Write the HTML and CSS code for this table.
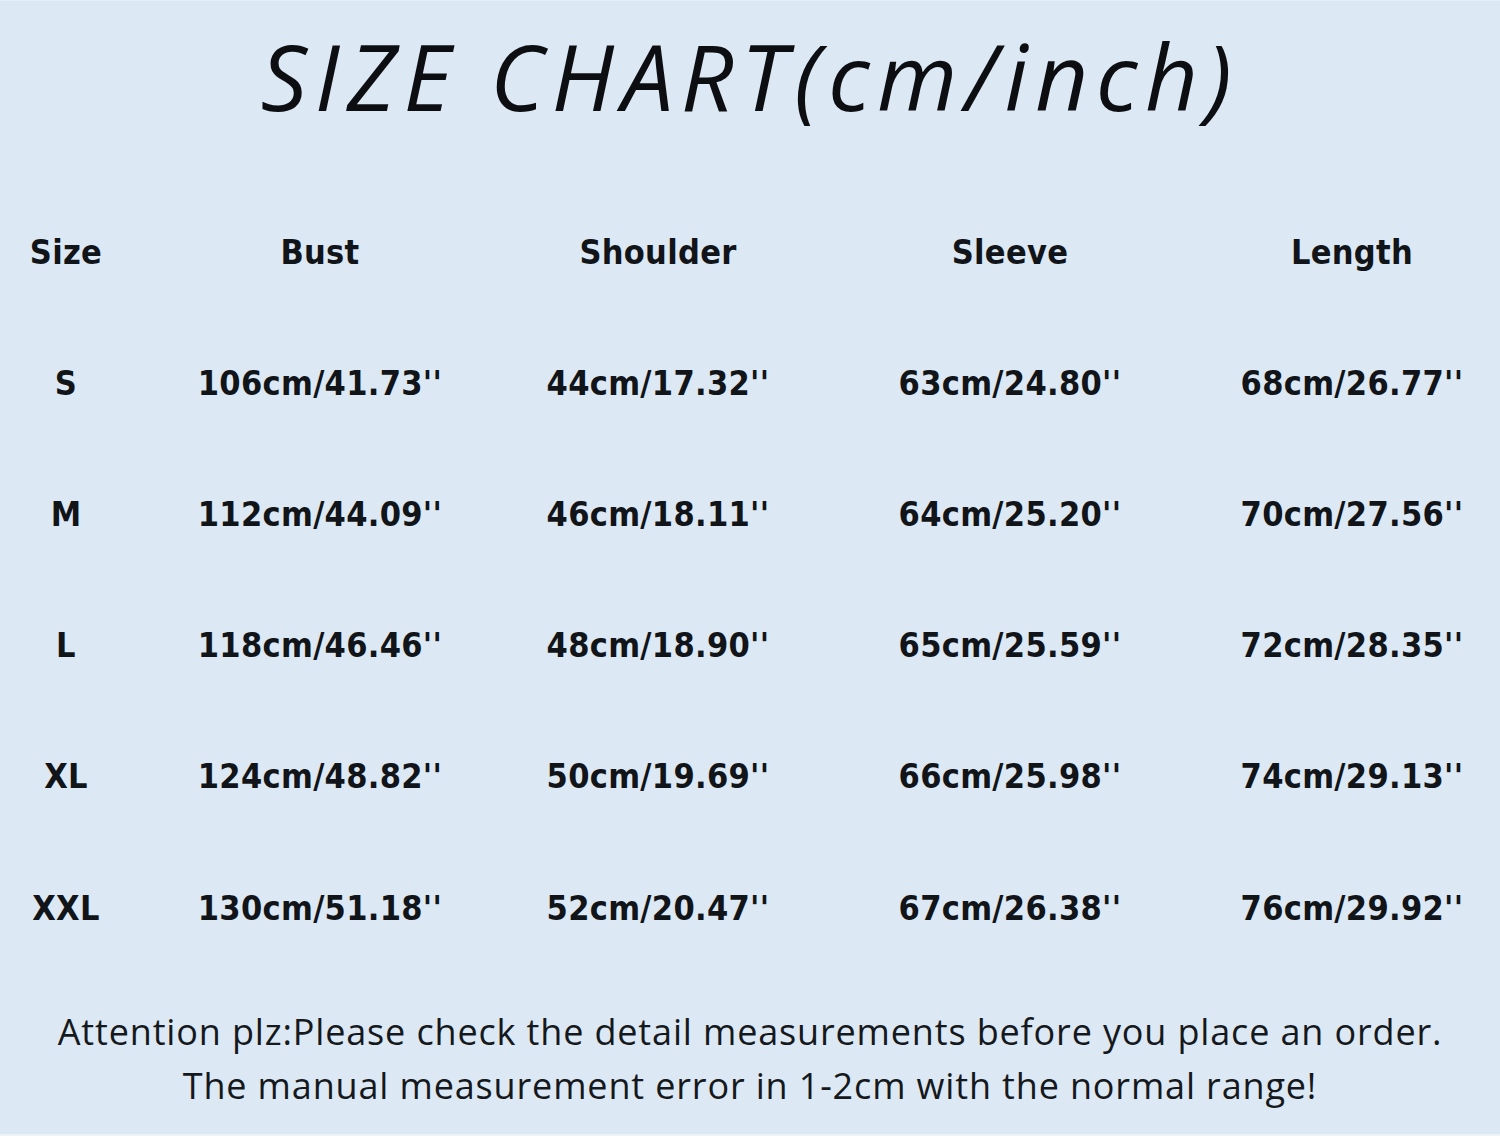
FILE: index.html
```html
<!DOCTYPE html>
<html lang="en">
<head>
<meta charset="utf-8">
<title>Size Chart</title>
<link rel="stylesheet" href="styles.css">
</head>
<body>
<main class="chart">
  <h1 class="title">SIZE CHART(cm/inch)</h1>
  <div class="table">
    <div class="cell head">Size</div>
    <div class="cell head">Bust</div>
    <div class="cell head">Shoulder</div>
    <div class="cell head">Sleeve</div>
    <div class="cell head">Length</div>

    <div class="cell">S</div>
    <div class="cell">106cm/41.73''</div>
    <div class="cell">44cm/17.32''</div>
    <div class="cell">63cm/24.80''</div>
    <div class="cell">68cm/26.77''</div>

    <div class="cell">M</div>
    <div class="cell">112cm/44.09''</div>
    <div class="cell">46cm/18.11''</div>
    <div class="cell">64cm/25.20''</div>
    <div class="cell">70cm/27.56''</div>

    <div class="cell">L</div>
    <div class="cell">118cm/46.46''</div>
    <div class="cell">48cm/18.90''</div>
    <div class="cell">65cm/25.59''</div>
    <div class="cell">72cm/28.35''</div>

    <div class="cell">XL</div>
    <div class="cell">124cm/48.82''</div>
    <div class="cell">50cm/19.69''</div>
    <div class="cell">66cm/25.98''</div>
    <div class="cell">74cm/29.13''</div>

    <div class="cell">XXL</div>
    <div class="cell">130cm/51.18''</div>
    <div class="cell">52cm/20.47''</div>
    <div class="cell">67cm/26.38''</div>
    <div class="cell">76cm/29.92''</div>
  </div>
  <div class="note">
    <p>Attention plz:Please check the detail measurements before you place an order.</p>
    <p>The manual measurement error in 1-2cm with the normal range!</p>
  </div>
</main>
</body>
</html>
```

FILE: styles.css
```css
html, body {
  margin: 0;
  padding: 0;
}

body {
  background: #ffffff;
}

.chart {
  width: 1500px;
  height: 1136px;
  background: #dce8f3;
  color: #111418;
  overflow: hidden;
  box-sizing: border-box;
  border-top: 1px solid #e6eef6;
  border-bottom: 2px solid #eef3f8;
}

.title {
  margin: 0;
  height: 185px;
  line-height: 150px;
  text-align: center;
  font-family: "Open Sans", "DejaVu Sans", sans-serif;
  font-style: italic;
  font-weight: 400;
  font-size: 92px;
  letter-spacing: 7.5px;
  color: #0c0e12;
}

.table {
  display: grid;
  grid-template-columns: 132px 376px 300px 404px 280px;
  grid-auto-rows: 131.2px;
  align-items: center;
  text-align: center;
  font-family: "DejaVu Sans Condensed", "DejaVu Sans", sans-serif;
  font-stretch: condensed;
  font-weight: 700;
  font-size: 34px;
  letter-spacing: 0.3px;
}

.cell {
  white-space: nowrap;
}

.note {
  padding-top: 32px;
  text-align: center;
  font-family: "Open Sans", "Noto Sans", sans-serif;
  font-size: 36px;
  line-height: 54px;
  letter-spacing: 0.85px;
  color: #15181c;
}

.note p {
  margin: 0;
}
```
